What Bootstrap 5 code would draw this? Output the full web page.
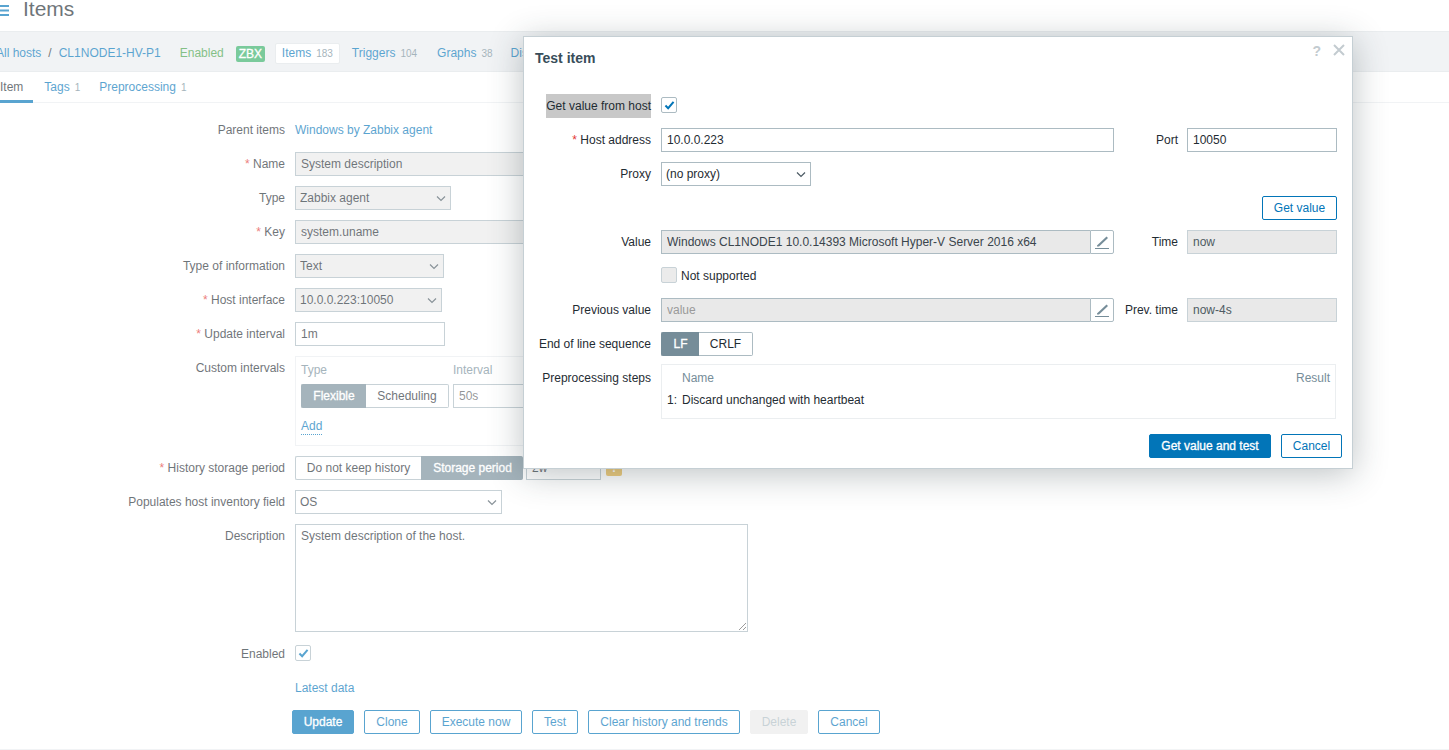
<!DOCTYPE html>
<html lang="en">
<head>
<meta charset="utf-8">
<title>Items</title>
<link href="https://cdn.jsdelivr.net/npm/bootstrap@5.3.0/dist/css/bootstrap.min.css" rel="stylesheet">
<style>
html,body{height:750px;overflow:hidden;background:#fff}
body{font:12px/16px "Liberation Sans",Arial,sans-serif;color:#1f2c33}
a{color:#0275b8;text-decoration:none}
.zb-frame{position:relative;width:1449px;height:750px;overflow:hidden}
.zb-page{opacity:.65;height:750px}
.zb-head{height:31px}
.zb-burger{width:9px;height:14px;margin-top:3px;flex:none}
.zb-title{font-size:21px;line-height:24px;margin:-3px 0 0 14px;font-weight:400;color:#1f2c33}
.zb-hostnav{height:41px;padding-top:3px;background:#ebeef0;border-top:1px solid #dfe4e7;border-bottom:1px solid #dfe4e7;white-space:nowrap;overflow:hidden}
.zb-count{color:#768d99;font-size:10px;margin-left:5px}
.zb-bold{-webkit-text-stroke:.3px currentColor}
.zb-tag{background:#34af67;color:#fff;line-height:16px;border-radius:2px;width:29px;text-align:center;margin:2px 0 0 12px}
.zb-current{background:#fff;border:1px solid #dfe4e7;border-radius:2px;padding:0 6px;height:21px;line-height:19px;margin-left:10px}
.zb-tabs{height:31px;border-bottom:1px solid #ebeef0}
.zb-tab{height:31px;line-height:31px;margin-left:11px}
.zb-tab-on{margin-left:0;padding-right:10px;color:#1f2c33;border-bottom:3px solid #0275b8}
.zb-form{padding-top:15px}
.zb-row{display:flex;margin-bottom:10px;min-height:24px}
.zb-lbl{width:285px;flex:none;text-align:right;line-height:24px;margin-right:10px}
.zb-req{color:#e33734}
.zb-field.form-control,.zb-field.form-select{font-size:12px;line-height:22px;height:24px;min-height:0;padding:0 5px;border:1px solid #acbbc2;border-radius:0;color:#1f2c33;box-shadow:none}
.zb-field.form-select{padding-right:20px;padding-left:4px;background-size:12px 12px;background-position:right 3px center;background-image:url("data:image/svg+xml,%3csvg xmlns='http://www.w3.org/2000/svg' viewBox='0 0 12 12'%3e%3cpath fill='none' stroke='%234b5a63' stroke-width='1.200' d='M2 4.500l4 4 4-4'/%3e%3c/svg%3e")}
.zb-dis.form-control,.zb-dis.form-select{background-color:#ebebeb;opacity:1}
.zb-w453{width:453px}
.zb-w156{width:156px}.zb-w149{width:149px}.zb-w147{width:147px}.zb-w150{width:150px}.zb-w207{width:207px}
.zb-field.zb-ctext.form-control{height:108px;width:453px;padding:3px 5px 1px;line-height:16px}
.zb-radio{display:flex;height:24px;line-height:22px;flex:none}
.zb-radio span{border:1px solid #acbbc2;background:#fff;text-align:center;color:#1f2c33}
.zb-radio span:first-child{border-right:0;border-radius:2px 0 0 2px}
.zb-radio span:last-child{border-left:0;border-radius:0 2px 2px 0}
.zb-radio .zb-sel{background:#768d99;border-color:#768d99;color:#fff;-webkit-text-stroke:.3px #fff}
.zb-w65{width:65px}.zb-w83{width:83px}.zb-w126{width:126px}.zb-w102{width:102px;padding-left:2px}.zb-w38{width:38px}.zb-w54{width:54px}
.zb-box{border:1px solid #ebeef0;width:600px;height:90px;padding:5px}
.zb-radiorow{margin-top:6px}
.zb-addrow{margin-top:10px}
.zb-muted{color:#768d99}
.zb-dotted{border-bottom:1px dotted #0275b8;line-height:15px;display:inline-block}
.zb-check{width:16px;height:16px;border:1px solid #acbbc2;border-radius:2px;background:#fff;display:flex;align-items:center;justify-content:center;flex:none;margin-top:3px}
.zb-check-off{background:#ebebeb;border-color:#c8d2d7}
.zb-warn{width:16px;height:16px;background:#e8b33c;border-radius:2px;margin:4px 0 0 5px;flex:none;color:#fff;font-weight:700;text-align:center}
.zb-btn.btn{font-size:12px;line-height:22px;height:24px;padding:0;border-radius:2px;border:1px solid #0275b8;color:#0275b8;background:#fff;white-space:nowrap}
.zb-btn.zb-pri{background:#0275b8;color:#fff;-webkit-text-stroke:.3px #fff}
.zb-btn.zb-off,.zb-btn.zb-off:disabled{background:#ebebeb;border-color:#ebebeb;color:#acbbc2;opacity:1}
.zb-foot{border-bottom:1px solid #ebeef0;height:16px}
.zb-modal{position:absolute;left:523px;top:36px;width:830px;height:433px;background:#fff;border:1px solid #c5cfd4;box-shadow:0 5px 32px rgba(36,52,60,.3)}
.zb-mtitle{font-size:14px;line-height:18px;font-weight:700;color:#384d5a;padding:12px 0 0 11px;height:57px}
.zb-mrow{display:flex;margin-bottom:10px;height:24px}
.zb-mlbl{width:127px;flex:none;text-align:right;line-height:24px;margin-right:10px}
.zb-hl{background:#c8c8c8;margin-left:22px;width:105px;white-space:nowrap}
.zb-plbl{width:64px;flex:none;text-align:right;line-height:24px;margin-right:9px}
.zb-mi.form-control{width:429px;border-right:0}
.zb-edit{width:24px;height:24px;flex:none;background:#fff;border:1px solid #acbbc2;border-radius:0 2px 2px 0;display:flex;align-items:center;justify-content:center}
.zb-ro.form-control{background:#e9e9e9;border-color:#c8d2d7;color:#4f5b63;opacity:1}
.zb-val.form-control{background:#e9e9e9;color:#3a454c;opacity:1}
.zb-val.form-control::placeholder{color:#9a9a9a;opacity:1}
.zb-steps{border:1px solid #ebeef0;width:675px;height:55px;margin-top:-2px;padding:5px 5px 0}
.zb-num{width:15px}
.zb-sp{height:16px;line-height:16px}
.zb-icons{position:absolute;top:6px;right:7px;color:#c3cbd0;line-height:16px;gap:12px}
.zb-icons svg{margin-top:1px}
.zb-qm{font-size:14px;font-weight:700}
.zb-mact{margin-top:15px;padding-right:10px;gap:10px}
.zb-gap10{gap:10px}
.zb-cb-txt{line-height:24px;margin-left:4px}
</style>
</head>
<body>
<div class="zb-frame">
 <div class="zb-page">
  <div class="zb-head d-flex">
   <svg class="zb-burger" viewBox="0 0 9 14"><path d="M0 2h9v2H0zM0 6.500h9v2H0zM0 11h9v2H0z" fill="#0275b8"/></svg>
   <h1 class="zb-title">Items</h1>
  </div>
  <div class="zb-hostnav d-flex align-items-center">
   <a href="#" style="margin-left:-4px">All hosts</a>
   <span style="margin-left:7px">/</span>
   <a href="#" style="margin-left:7px">CL1NODE1-HV-P1</a>
   <span style="margin-left:19px;color:#429e47">Enabled</span>
   <span class="zb-tag zb-bold">ZBX</span>
   <span class="zb-current"><a href="#">Items</a><span class="zb-count">183</span></span>
   <span style="margin-left:12px"><a href="#">Triggers</a><span class="zb-count">104</span></span>
   <span style="margin-left:20px"><a href="#">Graphs</a><span class="zb-count">38</span></span>
   <span style="margin-left:18px"><a href="#">Discovery rules</a></span>
  </div>
  <div class="zb-tabs d-flex">
   <span class="zb-tab zb-tab-on">Item</span>
   <span class="zb-tab"><a href="#">Tags</a><span class="zb-count">1</span></span>
   <span class="zb-tab" style="margin-left:19px"><a href="#">Preprocessing</a><span class="zb-count">1</span></span>
  </div>
  <div class="zb-form">
   <div class="zb-row"><div class="zb-lbl">Parent items</div><a href="#" style="line-height:24px">Windows by Zabbix agent</a></div>
   <div class="zb-row"><div class="zb-lbl"><span class="zb-req">*</span> Name</div><input class="form-control zb-field zb-dis zb-w453" value="System description" readonly></div>
   <div class="zb-row"><div class="zb-lbl">Type</div><select class="form-select zb-field zb-dis zb-w156"><option>Zabbix agent</option></select></div>
   <div class="zb-row"><div class="zb-lbl"><span class="zb-req">*</span> Key</div><input class="form-control zb-field zb-dis zb-w453" value="system.uname" readonly></div>
   <div class="zb-row"><div class="zb-lbl">Type of information</div><select class="form-select zb-field zb-dis zb-w149"><option>Text</option></select></div>
   <div class="zb-row"><div class="zb-lbl"><span class="zb-req">*</span> Host interface</div><select class="form-select zb-field zb-dis zb-w147"><option>10.0.0.223:10050</option></select></div>
   <div class="zb-row"><div class="zb-lbl"><span class="zb-req">*</span> Update interval</div><input class="form-control zb-field zb-w150" value="1m"></div>
   <div class="zb-row"><div class="zb-lbl">Custom intervals</div>
    <div class="zb-box">
     <div class="d-flex zb-muted"><span style="width:152px">Type</span><span>Interval</span></div>
     <div class="d-flex zb-radiorow">
      <div class="zb-radio"><span class="zb-sel zb-w65">Flexible</span><span class="zb-w83">Scheduling</span></div>
      <input class="form-control zb-field" style="width:150px;margin-left:4px" placeholder="50s">
     </div>
     <div class="zb-addrow"><a href="#" class="zb-dotted">Add</a></div>
    </div>
   </div>
   <div class="zb-row"><div class="zb-lbl"><span class="zb-req">*</span> History storage period</div>
    <div class="zb-radio"><span class="zb-w126">Do not keep history</span><span class="zb-sel zb-w102">Storage period</span></div>
    <input class="form-control zb-field" style="width:75px;margin-left:3px" value="2w">
    <span class="zb-warn">!</span>
   </div>
   <div class="zb-row"><div class="zb-lbl">Populates host inventory field</div><select class="form-select zb-field zb-w207"><option>OS</option></select></div>
   <div class="zb-row"><div class="zb-lbl">Description</div><textarea class="form-control zb-field zb-ctext">System description of the host.</textarea></div>
   <div class="zb-row"><div class="zb-lbl">Enabled</div><span class="zb-check"><svg width="11" height="9" viewBox="0 0 12 10"><path d="M1.500 5l3 3 6-7" fill="none" stroke="#0275b8" stroke-width="2.200"/></svg></span></div>
   <div class="zb-row"><div class="zb-lbl"></div><a href="#" style="line-height:24px">Latest data</a></div>
   <div class="zb-row mb-0 zb-gap10" style="margin-left:292px">
    <button class="btn zb-btn zb-pri" style="width:62px">Update</button>
    <button class="btn zb-btn" style="width:56px">Clone</button>
    <button class="btn zb-btn" style="width:92px">Execute now</button>
    <button class="btn zb-btn" style="width:46px">Test</button>
    <button class="btn zb-btn" style="width:152px">Clear history and trends</button>
    <button class="btn zb-btn zb-off" style="width:58px" disabled>Delete</button>
    <button class="btn zb-btn" style="width:62px">Cancel</button>
   </div>
   <div class="zb-foot"></div>
  </div>
 </div>

 <div class="zb-modal">
  <div class="zb-icons d-flex"><span class="zb-qm">?</span><svg width="12" height="12" viewBox="0 0 12 12"><path d="M1 1l10 10M11 1 1 11" stroke="#c3cbd0" stroke-width="2"/></svg></div>
  <div class="zb-mtitle">Test item</div>
  <div class="zb-mrow"><div class="zb-mlbl zb-hl">Get value from host</div><span class="zb-check"><svg width="11" height="9" viewBox="0 0 12 10"><path d="M1.500 5l3 3 6-7" fill="none" stroke="#0275b8" stroke-width="2.200"/></svg></span></div>
  <div class="zb-mrow"><div class="zb-mlbl"><span class="zb-req">*</span> Host address</div><input class="form-control zb-field zb-w453" value="10.0.0.223"><div class="zb-plbl">Port</div><input class="form-control zb-field zb-w150" value="10050"></div>
  <div class="zb-mrow"><div class="zb-mlbl">Proxy</div><select class="form-select zb-field zb-w150"><option>(no proxy)</option></select></div>
  <div class="zb-mrow justify-content-end" style="padding-right:15px"><button class="btn zb-btn" style="width:75px">Get value</button></div>
  <div class="zb-mrow"><div class="zb-mlbl">Value</div><input class="form-control zb-field zb-val zb-mi" value="Windows CL1NODE1 10.0.14393 Microsoft Hyper-V Server 2016 x64" readonly><span class="zb-edit"><svg width="16" height="16" viewBox="0 0 16 16"><path d="M3 11.500 12.500 2.500l1.500 1.500L5 12.500H3z" fill="#768d99"/><path d="M1 14.500h14" stroke="#768d99" stroke-width="1"/></svg></span><div class="zb-plbl">Time</div><input class="form-control zb-field zb-ro zb-w150" value="now" readonly></div>
  <div class="zb-mrow"><div class="zb-mlbl"></div><span class="zb-check zb-check-off"></span><span class="zb-cb-txt">Not supported</span></div>
  <div class="zb-mrow"><div class="zb-mlbl">Previous value</div><input class="form-control zb-field zb-val zb-mi" placeholder="value" readonly><span class="zb-edit"><svg width="16" height="16" viewBox="0 0 16 16"><path d="M3 11.500 12.500 2.500l1.500 1.500L5 12.500H3z" fill="#768d99"/><path d="M1 14.500h14" stroke="#768d99" stroke-width="1"/></svg></span><div class="zb-plbl">Prev. time</div><input class="form-control zb-field zb-ro zb-w150" value="now-4s" readonly></div>
  <div class="zb-mrow"><div class="zb-mlbl">End of line sequence</div><div class="zb-radio"><span class="zb-sel zb-w38">LF</span><span class="zb-w54">CRLF</span></div></div>
  <div class="zb-mrow" style="height:53px"><div class="zb-mlbl">Preprocessing steps</div>
   <div class="zb-steps">
    <div class="d-flex justify-content-between zb-muted zb-sp" style="padding-left:15px"><span>Name</span><span>Result</span></div>
    <div class="d-flex zb-sp" style="margin-top:6px"><span class="zb-num">1:</span><span>Discard unchanged with heartbeat</span></div>
   </div>
  </div>
  <div class="d-flex justify-content-end zb-mact">
   <button class="btn zb-btn zb-pri" style="width:122px">Get value and test</button>
   <button class="btn zb-btn" style="width:61px">Cancel</button>
  </div>
 </div>
</div>
<script src="https://cdn.jsdelivr.net/npm/bootstrap@5.3.0/dist/js/bootstrap.bundle.min.js"></script>
</body>
</html>
